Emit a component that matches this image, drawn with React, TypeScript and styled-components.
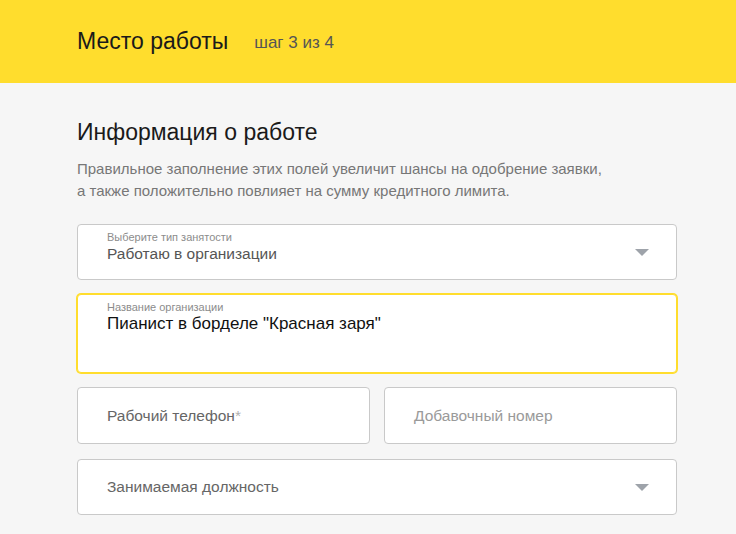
import React from 'react';
import styled, { createGlobalStyle } from 'styled-components';

const GlobalStyle = createGlobalStyle`
  html, body {
    margin: 0;
    padding: 0;
    background: #f6f6f6;
    font-family: "Liberation Sans", Arial, sans-serif;
  }
`;

const Header = styled.header`
  height: 83px;
  background: #ffdd2d;
  display: flex;
  align-items: center;
  padding: 0 77px;
  gap: 26px;
  box-sizing: border-box;
`;

const HeaderTitle = styled.h1`
  margin: 0;
  font-size: 23px;
  font-weight: 400;
  color: #1a1a1a;
`;

const Step = styled.span`
  font-size: 17px;
  color: #555;
  padding-top: 2px;
`;

const Content = styled.main`
  padding: 36px 59px 20px 77px;
  width: 600px;
`;

const SectionTitle = styled.h2`
  margin: 0 0 12px;
  font-size: 23px;
  font-weight: 400;
  color: #1a1a1a;
`;

const Description = styled.p`
  margin: 0 0 22px;
  font-size: 15px;
  line-height: 22px;
  color: #777;
`;

const Form = styled.div`
  display: flex;
  flex-direction: column;
  gap: 14px;
`;

const Row = styled.div`
  display: grid;
  grid-template-columns: 1fr 1fr;
  gap: 14px;
  margin-bottom: 1px;
`;

const Field = styled.div<{ $focused?: boolean; $height?: number; $top?: boolean }>`
  position: relative;
  box-sizing: border-box;
  height: ${(p) => p.$height ?? 57}px;
  background: #fff;
  border: 1px solid ${(p) => (p.$focused ? '#ffdd2d' : '#c9c9c9')};
  box-shadow: ${(p) => (p.$focused ? '0 0 0 1px #ffdd2d' : 'none')};
  border-radius: 4px;
  padding: 0 48px 0 29px;
  display: flex;
  flex-direction: column;
  justify-content: ${(p) => (p.$top ? 'flex-start' : 'center')};
`;

const FloatLabel = styled.div`
  font-size: 11px;
  color: #8c8c8c;
  line-height: 12px;
  margin-top: 6px;
`;

const Value = styled.div<{ $dark?: boolean }>`
  font-size: ${(p) => (p.$dark ? '17px' : '15.5px')};
  color: ${(p) => (p.$dark ? '#111' : '#555')};
  line-height: 18px;
  margin-top: 2px;
`;

const Placeholder = styled.div<{ $light?: boolean }>`
  font-size: 15.5px;
  color: ${(p) => (p.$light ? '#9a9a9a' : '#666')};
`;

const Required = styled.span`
  color: #b0b0b0;
`;

const Arrow = styled.div`
  position: absolute;
  right: 27px;
  top: 50%;
  margin-top: -3px;
  width: 0;
  height: 0;
  border-left: 7px solid transparent;
  border-right: 7px solid transparent;
  border-top: 7px solid #9ea3aa;
`;

export default function App() {
  return (
    <>
      <GlobalStyle />
      <Header>
        <HeaderTitle>Место работы</HeaderTitle>
        <Step>шаг 3 из 4</Step>
      </Header>
      <Content>
        <SectionTitle>Информация о работе</SectionTitle>
        <Description>
          Правильное заполнение этих полей увеличит шансы на одобрение заявки,
          <br />а также положительно повлияет на сумму кредитного лимита.
        </Description>
        <Form>
          <Field $height={56} $top>
            <FloatLabel>Выберите тип занятости</FloatLabel>
            <Value>Работаю в организации</Value>
            <Arrow />
          </Field>
          <Field $focused $height={79} $top>
            <FloatLabel>Название организации</FloatLabel>
            <Value $dark>Пианист в борделе "Красная заря"</Value>
          </Field>
          <Row>
            <Field>
              <Placeholder>
                Рабочий телефон<Required>*</Required>
              </Placeholder>
            </Field>
            <Field>
              <Placeholder $light>Добавочный номер</Placeholder>
            </Field>
          </Row>
          <Field $height={56}>
            <Placeholder>Занимаемая должность</Placeholder>
            <Arrow />
          </Field>
        </Form>
      </Content>
    </>
  );
}
